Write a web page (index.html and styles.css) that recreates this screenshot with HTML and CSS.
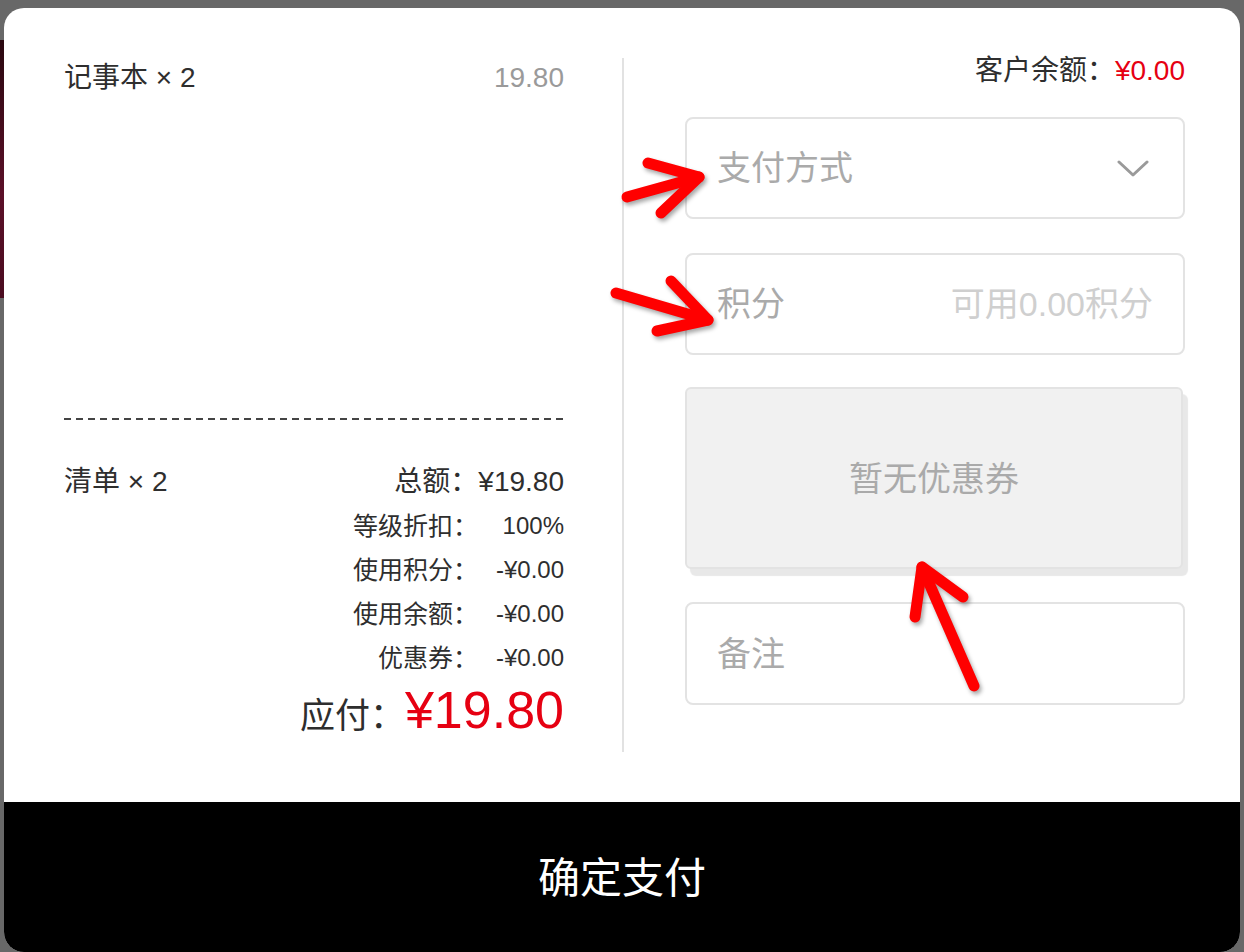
FILE: index.html
```html
<!DOCTYPE html>
<html lang="zh-CN">
<head>
  <meta charset="UTF-8">
  <meta name="viewport" content="width=device-width, initial-scale=1.0">
  <title>确定支付</title>
  <link rel="stylesheet" href="styles.css">
</head>
<body>
  <div class="backdrop-photo"></div>

  <div class="modal">
    <div class="modal-body">
      <section class="order">
        <ul class="items">
          <li class="item">
            <span class="item-name">记事本 × 2</span>
            <span class="item-price">19.80</span>
          </li>
        </ul>

        <div class="summary">
          <div class="summary-head">
            <span>清单 × 2</span>
            <span class="total">总额：¥19.80</span>
          </div>
          <div class="summary-row"><span class="label">等级折扣：</span><span class="value">100%</span></div>
          <div class="summary-row"><span class="label">使用积分：</span><span class="value">-¥0.00</span></div>
          <div class="summary-row"><span class="label">使用余额：</span><span class="value">-¥0.00</span></div>
          <div class="summary-row"><span class="label">优惠券：</span><span class="value">-¥0.00</span></div>
          <div class="due">
            <span class="due-label">应付：</span>
            <span class="due-amount">¥19.80</span>
          </div>
        </div>
      </section>

      <div class="divider"></div>

      <section class="payment">
        <div class="balance">客户余额：<span class="balance-amount">¥0.00</span></div>

        <div class="field field-select">
          <span>支付方式</span>
          <svg class="chevron" width="32" height="18" viewBox="0 0 32 18">
            <polyline points="2,3 16,16 30,3" fill="none" stroke="#9a9a9a" stroke-width="3" stroke-linecap="round" stroke-linejoin="round"/>
          </svg>
        </div>

        <div class="field field-points">
          <span>积分</span>
          <span class="hint">可用0.00积分</span>
        </div>

        <div class="coupon">暂无优惠券</div>

        <div class="field field-note">
          <span>备注</span>
        </div>
      </section>
    </div>

    <button class="confirm" type="button">确定支付</button>
  </div>

  <!-- red markers drawn over the screenshot -->
  <svg class="annotations" width="1244" height="952" viewBox="0 0 1244 952">
    <g fill="none" stroke="#ff0000" stroke-width="11" stroke-linecap="round" stroke-linejoin="round">
      <polyline points="627,197 699,177"/>
      <polyline points="648,163 699,177 661,213"/>

      <polyline points="616,293 708,320"/>
      <polyline points="671,281 708,320 657,331"/>

      <polyline points="974,686 922,567"/>
      <polyline points="915,617 922,567 963,597"/>
    </g>
  </svg>
</body>
</html>
```

FILE: styles.css
```css
body {
  margin: 0;
  padding: 0;
  background-color: #686868;
  font-family: "Liberation Sans", "Noto Sans CJK SC", sans-serif;
  color: #2e2e2e;
  height: 952px;
  overflow: hidden;
}
.backdrop-photo {
  position: absolute;
  left: 0;
  top: 40px;
  width: 20px;
  height: 258px;
  background: linear-gradient(to bottom, #2a0810, #5b1028 60%, #4a0c20);
}
.modal {
  position: relative;
  margin: 8px 4px 0;
  width: 1236px;
  height: 944px;
  background-color: #fff;
  border-radius: 20px;
  overflow: hidden;
  display: flex;
  flex-direction: column;
}
.modal-body {
  flex: 1;
  display: flex;
  padding: 50px 55px 50px 60px;
}
.order {
  width: 500px;
  display: flex;
  flex-direction: column;
  justify-content: space-between;
}
.items {
  list-style: none;
  margin: 0;
  padding: 0;
}
.item {
  display: flex;
  justify-content: space-between;
  font-size: 28px;
  line-height: 40px;
}
.item-price {
  color: #9a9a9a;
}
.summary {
  background: repeating-linear-gradient(to right, #444 0 7px, transparent 7px 12px) top left / 100% 2px no-repeat;
  padding-top: 42px;
  padding-bottom: 12px;
}
.summary-head {
  display: flex;
  justify-content: space-between;
  font-size: 28px;
  line-height: 44px;
}
.summary-row {
  display: flex;
  justify-content: flex-end;
  font-size: 24px;
  line-height: 44px;
}
.summary-row .label {
  font-size: 25px;
}
.summary-row .value {
  width: 86px;
  text-align: right;
}
.due {
  display: flex;
  justify-content: flex-end;
  align-items: baseline;
  height: 60px;
}
.due-label {
  font-size: 35px;
}
.due-amount {
  font-size: 52px;
  line-height: 60px;
  color: #e60012;
}
.divider {
  width: 2px;
  background-color: #e2e2e2;
  margin: 0 61px 0 58px;
}
.payment {
  width: 500px;
}
.balance {
  text-align: right;
  font-size: 28px;
  line-height: 26px;
  margin-bottom: 33px;
}
.balance-amount {
  color: #e60012;
}
.field {
  box-sizing: border-box;
  height: 102px;
  border: 2px solid #e3e3e3;
  border-radius: 8px;
  padding: 0 30px 5px;
  display: flex;
  align-items: center;
  justify-content: space-between;
  font-size: 34px;
  color: #aaa;
}
.field-points {
  margin-top: 34px;
}
.field-note {
  margin-top: 33px;
  height: 103px;
}
.field-select {
  padding-right: 34px;
}
.chevron {
  display: block;
  margin-top: 4px;
}
.hint {
  color: #cfcfcf;
}
.coupon {
  box-sizing: border-box;
  margin-top: 32px;
  height: 182px;
  width: 498px;
  padding-bottom: 4px;
  border: 2px solid #e3e3e3;
  border-radius: 6px;
  background-color: #f1f1f1;
  box-shadow: 5px 7px 1px #e8e8e8;
  display: flex;
  align-items: center;
  justify-content: center;
  font-size: 34px;
  color: #aaa;
}
.confirm {
  height: 150px;
  width: 100%;
  border: none;
  background-color: #000;
  color: #fff;
  font-family: "Liberation Sans", "Noto Sans CJK SC", sans-serif;
  font-size: 42px;
  padding: 0 0 6px;
}
.annotations {
  position: absolute;
  left: 0;
  top: 0;
  pointer-events: none;
  filter: drop-shadow(2px 3px 2px rgba(0, 0, 0, 0.35));
}
```
